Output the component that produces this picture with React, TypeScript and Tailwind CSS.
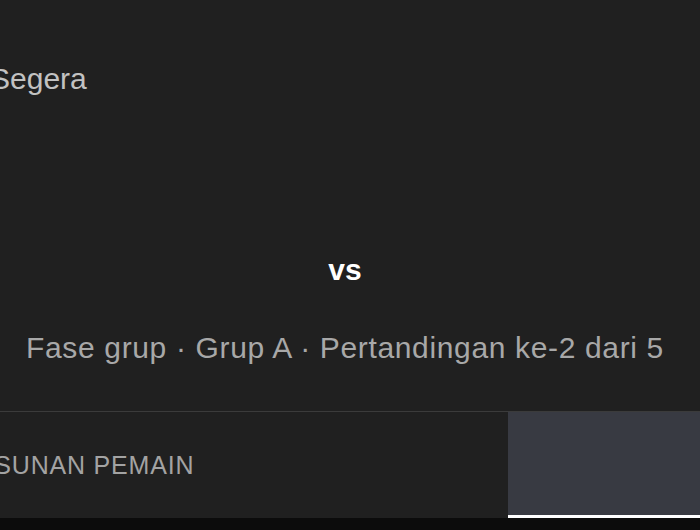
import React from "react";

// Match header: status, versus line and round info, then the tab strip
export default function App() {
    return (
        <div className="w-[700px] h-[530px] overflow-hidden bg-[#202020] flex flex-col font-['Liberation_Sans',Arial,sans-serif]">
            <div className="-ml-[10px] w-[710px] flex-1 flex flex-col">
                <div className="pt-[61px] text-[30px] leading-[36px] text-[#c2c2c2]">Segera</div>
                <div className="mt-[155px] text-center text-[30px] leading-[36px] font-bold text-white">vs</div>
                <div className="mt-[42px] text-center text-[30px] leading-[36px] tracking-[0.65px] text-[#a8a8a8]">
                    Fase grup · Grup A · Pertandingan ke-2 dari 5
                </div>
            </div>

            {/* Tabs */}
            <div className="h-[107px] border-t border-[#3b3b3b] flex">
                <div className="flex-1 flex items-center overflow-hidden">
                    <span className="-ml-[42px] whitespace-nowrap text-[25px] leading-[30px] tracking-[0.8px] text-[#a3a3a3]">
                        SUSUNAN PEMAIN
                    </span>
                </div>
                <div className="w-[192px] bg-[#383a42] border-b-[3px] border-white" />
            </div>
            <div className="h-[12px] bg-[#0c0c0c]" />
        </div>
    );
}
